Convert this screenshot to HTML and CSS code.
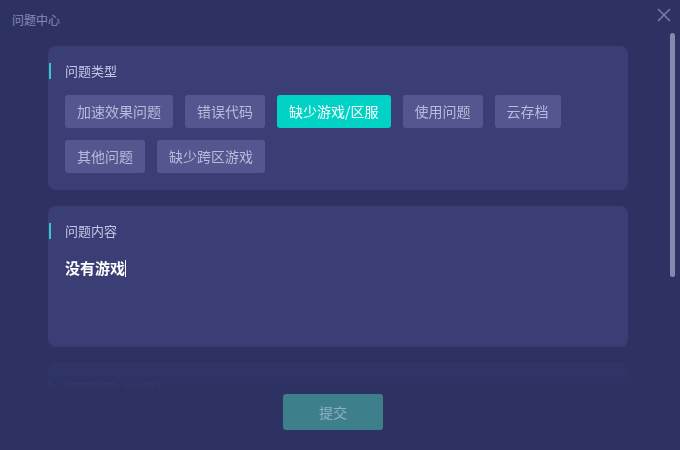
FILE: index.html
```html
<!DOCTYPE html>
<html lang="zh-CN">
<head>
<meta charset="utf-8">
<title>问题中心</title>
<link rel="stylesheet" href="styles.css">
</head>
<body>
<div class="window">
  <header class="header">
    <div class="title">问题中心</div>
    <button class="close" aria-label="关闭">
      <svg width="14" height="14" viewBox="0 0 14 14"><path d="M1 1L13 13M13 1L1 13" stroke="#7f83ad" stroke-width="1.4" fill="none"/></svg>
    </button>
  </header>
  <div class="main">
    <div class="scroll">
      <section class="card card-type">
        <div class="label">问题类型</div>
        <div class="tags">
          <span class="tag">加速效果问题</span>
          <span class="tag">错误代码</span>
          <span class="tag active">缺少游戏/区服</span>
          <span class="tag">使用问题</span>
          <span class="tag">云存档</span>
          <span class="tag">其他问题</span>
          <span class="tag">缺少跨区游戏</span>
        </div>
      </section>
      <section class="card card-content">
        <div class="label">问题内容</div>
        <div class="content"><span class="typed">没有游戏</span><span class="caret"></span></div>
      </section>
      <section class="card card-extra">
        <div class="label">问题截图（选填）</div>
        <div class="extra-body"></div>
      </section>
    </div>
    <div class="scrollbar"><div class="thumb"></div></div>
  </div>
  <footer class="footer">
    <button class="submit">提交</button>
  </footer>
</div>
</body>
</html>
```

FILE: styles.css
```css
* { box-sizing: border-box; }
html, body { margin: 0; padding: 0; }
body {
  width: 680px;
  height: 450px;
  overflow: hidden;
  background: #2e3263;
  font-family: "Noto Sans CJK SC", "Microsoft YaHei", sans-serif;
}
.window {
  width: 680px;
  height: 450px;
  display: flex;
  flex-direction: column;
  background: #2e3263;
}
.header {
  height: 33px;
  flex: none;
  display: flex;
  justify-content: space-between;
  align-items: flex-start;
  padding: 0 9px 0 12px;
}
.title {
  padding-top: 13px;
  font-size: 12px;
  line-height: 14px;
  color: #868bbd;
}
.close {
  margin-top: 8px;
  width: 14px;
  height: 14px;
  padding: 0;
  border: 0;
  background: none;
  display: block;
}
.close svg { display: block; }
.main {
  height: 357px;
  flex: none;
  display: flex;
}
.scroll {
  width: 580px;
  margin-left: 48px;
  padding-top: 13px;
  display: flex;
  flex-direction: column;
  gap: 16px;
  overflow: hidden;
  -webkit-mask-image: linear-gradient(to bottom, #000 calc(100% - 48px), rgba(0,0,0,0.22) calc(100% - 28px), rgba(0,0,0,0) 100%);
  mask-image: linear-gradient(to bottom, #000 calc(100% - 48px), rgba(0,0,0,0.22) calc(100% - 28px), rgba(0,0,0,0) 100%);
}
.card {
  flex: none;
  background: #3b3e75;
  border-radius: 8px;
  padding: 17px 17px 16px;
}
.card-type { padding-bottom: 17px; }
.label {
  display: flex;
  align-items: center;
  gap: 14px;
  margin-left: -16px;
  height: 16px;
  font-size: 13px;
  line-height: 16px;
  color: #c3c7e6;
}
.label::before {
  content: "";
  width: 2px;
  height: 16px;
  background: #36c7c7;
  flex: none;
}
.tags {
  margin-top: 16px;
  display: flex;
  flex-wrap: wrap;
  gap: 12px;
}
.tag {
  height: 33px;
  padding: 0 12px;
  font-size: 14px;
  line-height: 33px;
  color: #b6bcdb;
  background: #53568f;
  border-radius: 3px;
  white-space: nowrap;
}
.tag.active {
  background: #00d2c5;
  color: #ffffff;
}
.content {
  margin-top: 14px;
  height: 78px;
  display: flex;
  align-items: flex-start;
}
.typed {
  font-size: 15px;
  line-height: 30px;
  font-weight: 700;
  color: #ffffff;
}
.caret {
  width: 1px;
  height: 17px;
  margin-top: 7px;
  background: #ffffff;
}
.extra-body { height: 80px; }
.scrollbar {
  margin-left: auto;
  margin-right: 5px;
  width: 5px;
}
.thumb {
  width: 5px;
  height: 244px;
  border-radius: 3px;
  background: #8688ad;
}
.footer {
  flex: none;
  padding: 4px 14px 0 0;
  display: flex;
  justify-content: center;
}
.submit {
  width: 100px;
  height: 36px;
  border: 0;
  border-radius: 3px;
  background: #3e7f8c;
  color: #8cb0bd;
  font-family: "Noto Sans CJK SC", "Microsoft YaHei", sans-serif;
  font-size: 14px;
  padding: 0;
}
```
